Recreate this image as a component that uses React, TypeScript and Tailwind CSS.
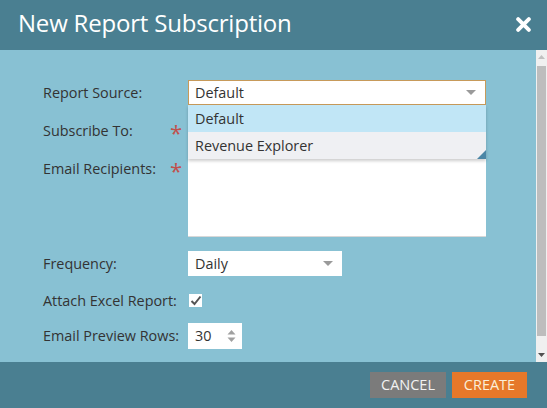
import React from "react";

const font = { fontFamily: '"Open Sans", "Noto Sans", sans-serif' };

function Caret() {
  return (
    <svg width="10" height="6" viewBox="0 0 10 6" className="shrink-0">
      <path d="M0 0 L10 0 L5 5 Z" fill="#9a9a9a" />
    </svg>
  );
}

export default function App() {
  return (
    <div className="w-[547px] h-[408px] flex flex-col overflow-hidden text-[#333]" style={font}>
      {/* header */}
      <div className="h-[50px] bg-[#4a7f91] flex items-center justify-between pl-[18px] pr-[16px] shrink-0">
        <div className="text-white text-[24px] leading-none tracking-[-0.2px] mt-[-4px]">New Report Subscription</div>
        <svg width="15" height="15" viewBox="0 0 14 14" className="mt-[-2px]">
          <path d="M2 2 L12 12 M12 2 L2 12" stroke="white" strokeWidth="3.6" strokeLinecap="round" />
        </svg>
      </div>
      {/* body */}
      <div className="flex-1 flex bg-[#88c1d3] min-h-0">
        <div className="flex-1 pl-[43px] pt-[30px] text-[14.4px]">
          <div className="flex flex-col">
            {/* Report Source */}
            <div className="flex items-center h-[25px]">
              <div className="w-[145px]">Report Source:</div>
              <div className="relative">
                <div className="w-[298px] h-[25px] bg-white border border-[#c79a5a] flex items-center justify-between pl-[6px] pr-[9px]">
                  <span>Default</span>
                  <Caret />
                </div>
                <div className="absolute left-0 top-[25px] w-[298px] shadow-[0_2px_3px_rgba(0,0,0,0.2)] z-10">
                  <div className="h-[27px] bg-[#c1e6f6] flex items-center pl-[7px]">Default</div>
                  <div className="h-[27px] bg-[#eff0f3] flex items-center pl-[7px] relative">
                    Revenue Explorer
                    <svg width="9" height="9" viewBox="0 0 9 9" className="absolute right-0 bottom-0">
                      <path d="M9 0 L9 9 L0 9 Z" fill="#4b86a6" />
                    </svg>
                  </div>
                </div>
              </div>
            </div>
            {/* Subscribe To */}
            <div className="flex items-center h-[25px] mt-[13px]">
              <div className="w-[127px]">Subscribe To:</div>
              <span className="text-[#c0504d] text-[22px] leading-none mt-[2px] w-[18px]">*</span>
              <div className="w-[298px] h-[25px] bg-white" />
            </div>
            {/* Email Recipients */}
            <div className="flex items-start mt-[13px]">
              <div className="w-[127px] leading-[25px]">Email Recipients:</div>
              <span className="text-[#c0504d] text-[22px] leading-none mt-[3px] w-[18px]">*</span>
              <div className="w-[298px] h-[81px] bg-white border-b border-[#d8d8d8]" />
            </div>
            {/* Frequency */}
            <div className="flex items-center h-[25px] mt-[14px]">
              <div className="w-[145px]">Frequency:</div>
              <div className="w-[154px] h-[25px] bg-white flex items-center justify-between pl-[7px] pr-[9px]">
                <span>Daily</span>
                <Caret />
              </div>
            </div>
            {/* Attach Excel */}
            <div className="flex items-center h-[25px] mt-[12px]">
              <div className="w-[146px]">Attach Excel Report:</div>
              <div className="w-[13px] h-[13px] bg-white flex items-center justify-center">
                <svg width="12" height="11" viewBox="0 0 12 11">
                  <path d="M1.5 6 L4.5 9 L10.5 1.5" stroke="#555" strokeWidth="2" fill="none" />
                </svg>
              </div>
            </div>
            {/* Email Preview Rows */}
            <div className="flex items-center h-[26px] mt-[10px]">
              <div className="w-[145px]">Email Preview Rows:</div>
              <div className="w-[54px] h-[26px] bg-white flex items-center justify-between pl-[7px] pr-[6px]">
                <span>30</span>
                <svg width="9" height="14" viewBox="0 0 9 14">
                  <path d="M0.5 5.5 L4.5 1 L8.5 5.5 Z" fill="#a0a0a0" />
                  <path d="M0.5 8.5 L4.5 13 L8.5 8.5 Z" fill="#a0a0a0" />
                </svg>
              </div>
            </div>
          </div>
        </div>
        {/* scrollbar */}
        <div className="w-[11px] bg-[#f0f0f0] flex flex-col items-center shrink-0">
          <div className="h-[14px] flex items-center justify-center">
            <svg width="7" height="4" viewBox="0 0 7 4"><path d="M0 4 L7 4 L3.5 0 Z" fill="#c0c0c0" /></svg>
          </div>
          <div className="w-[9px] h-[270px] bg-[#bdbdbd] mt-[2px]" />
          <div className="flex-1" />
          <div className="h-[14px] flex items-center justify-center">
            <svg width="7" height="4" viewBox="0 0 7 4"><path d="M0 0 L7 0 L3.5 4 Z" fill="#505050" /></svg>
          </div>
        </div>
      </div>
      {/* footer */}
      <div className="h-[46px] bg-[#4a7f91] flex items-center justify-end pr-[20px] gap-[6px] shrink-0">
        <div className="w-[76px] h-[26px] bg-[#7b7b7b] text-[#f2f2f2] text-[14.5px] flex items-center justify-center">CANCEL</div>
        <div className="w-[75px] h-[26px] bg-[#e6782a] text-[#fbefd8] text-[14.5px] flex items-center justify-center">CREATE</div>
      </div>
    </div>
  );
}
